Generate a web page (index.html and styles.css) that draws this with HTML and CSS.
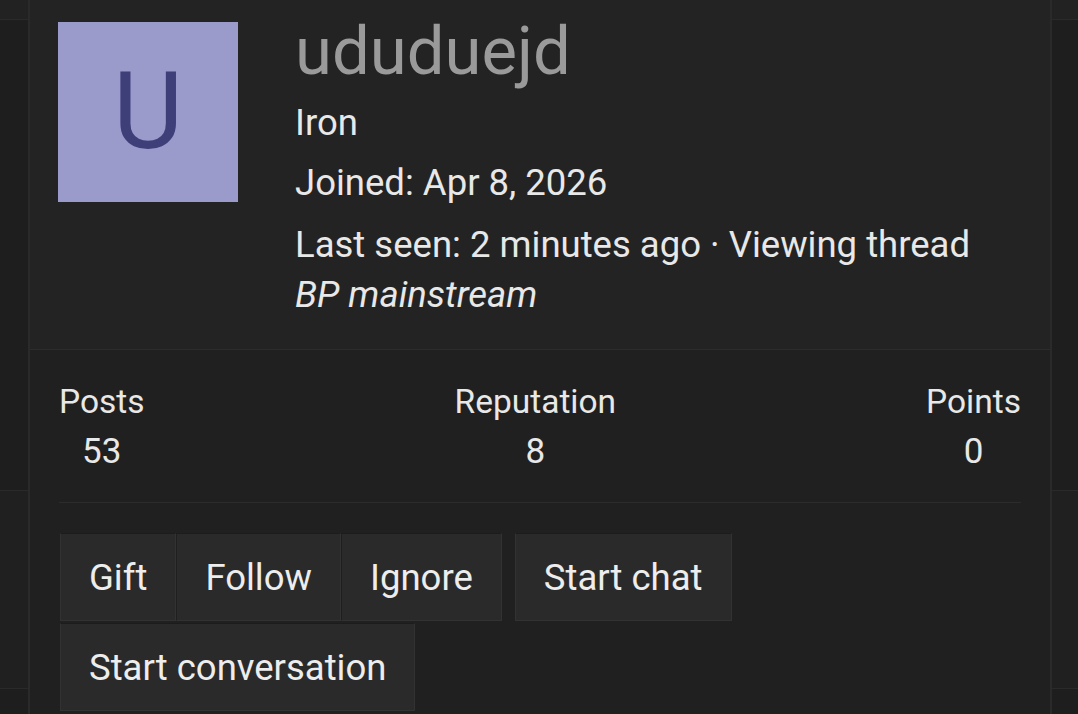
FILE: index.html
```html
<!DOCTYPE html>
<html lang="en">
<head>
<meta charset="utf-8">
<title>ududuejd</title>
<link rel="stylesheet" href="styles.css">
</head>
<body>
<div class="page">
  <div class="gutter gutter-left">
    <div class="seg seg-a"></div>
    <div class="seg seg-b"></div>
    <div class="seg seg-c"></div>
    <div class="seg seg-d"></div>
  </div>
  <div class="card">
    <div class="card-header">
      <div class="avatar"><span>U</span></div>
      <div class="info">
        <h1 class="username">ududuejd</h1>
        <div class="info-line">Iron</div>
        <div class="info-line">Joined: Apr 8, 2026</div>
        <div class="info-line info-last">Last seen: 2 minutes ago · Viewing thread <em>BP mainstream</em></div>
      </div>
    </div>
    <div class="card-body">
      <dl class="stats">
        <div class="stat"><dt>Posts</dt><dd>53</dd></div>
        <div class="stat"><dt>Reputation</dt><dd>8</dd></div>
        <div class="stat"><dt>Points</dt><dd>0</dd></div>
      </dl>
      <div class="actions">
        <div class="btn-group">
          <a class="btn">Gift</a>
          <a class="btn">Follow</a>
          <a class="btn">Ignore</a>
        </div>
        <a class="btn">Start chat</a>
        <a class="btn">Start conversation</a>
      </div>
    </div>
  </div>
  <div class="gutter gutter-right">
    <div class="seg seg-a"></div>
    <div class="seg seg-b"></div>
    <div class="seg seg-c"></div>
    <div class="seg seg-d"></div>
  </div>
</div>
</body>
</html>
```

FILE: styles.css
```css
html, body {
  margin: 0;
  padding: 0;
  background: #1d1d1d;
  height: 714px;
  overflow: hidden;
}

body {
  font-family: Roboto, "Liberation Sans", sans-serif;
  color: #e8e8e8;
}

.page {
  display: flex;
  width: 1078px;
  height: 714px;
}

.gutter {
  display: flex;
  flex-direction: column;
  flex: 1 1 auto;
}

.gutter-left { width: 28px; }
.gutter-right { width: 26px; }

.seg {
  border-bottom: 1px solid #2a2a2a;
}

.seg-a { height: 19px; background: #222222; }
.seg-b { height: 470px; background: #1e1e1e; }
.seg-c { height: 197px; background: #202020; }
.seg-d { flex: 1; background: #1e1e1e; border-bottom: 0; }

.card {
  width: 1020px;
  flex: 0 0 1020px;
  border-left: 2px solid #2a2a2a;
  border-right: 2px solid #2a2a2a;
  background: #202020;
  display: flex;
  flex-direction: column;
}

.card-header {
  display: flex;
  align-items: flex-start;
  gap: 57px;
  padding: 22px 29px 29px 28px;
  background: #232323;
  border-bottom: 1px solid #2c2c2c;
}

.avatar {
  width: 180px;
  height: 180px;
  flex: 0 0 180px;
  background: #9a9acb;
  color: #3e3e78;
  display: flex;
  align-items: center;
  justify-content: center;
  font-size: 108px;
  line-height: 1;
}

.avatar span {
  display: block;
  margin-top: -2px;
}

.info {
  display: flex;
  flex-direction: column;
  gap: 10px;
  max-width: 700px;
  font-size: 36.5px;
  line-height: 50px;
}

.username {
  margin: 0 0 8px 0;
  font-size: 67px;
  line-height: 58px;
  font-weight: 400;
  color: #9a9a9a;
}

.info-last {
  margin-top: 2px;
}

.info-line em {
  font-style: italic;
}

.card-body {
  padding: 0 29px 0 29px;
  display: flex;
  flex-direction: column;
}

.stats {
  margin: 0;
  padding: 27px 0 25px 0;
  display: flex;
  justify-content: space-between;
  border-bottom: 1px solid #2c2c2c;
  font-size: 33.5px;
  line-height: 50px;
}

.stat {
  display: flex;
  flex-direction: column;
  align-items: center;
}

.stat dt,
.stat dd {
  margin: 0;
}

.stat dd {
  font-size: 35px;
  line-height: 50px;
}

.actions {
  display: flex;
  flex-wrap: wrap;
  column-gap: 13px;
  row-gap: 2px;
  padding-top: 30px;
  padding-left: 1px;
}

.btn-group {
  display: flex;
}

.btn {
  display: block;
  padding: 19px 28px 17px 28px;
  font-size: 36.5px;
  line-height: 50px;
  background: #2a2a2a;
  color: #ededed;
  border: 1px solid #323232;
  border-top-color: #1c1c1c;
  cursor: pointer;
}

.btn-group .btn + .btn {
  border-left-color: #1f1f1f;
}
```
